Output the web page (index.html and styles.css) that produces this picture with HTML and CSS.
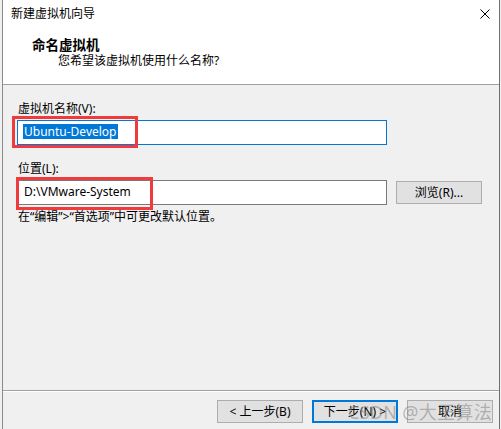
FILE: index.html
```html
<!DOCTYPE html>
<html lang="zh-CN">
<head>
<meta charset="utf-8">
<title>新建虚拟机向导</title>
<link rel="stylesheet" href="styles.css">
</head>
<body>
<div class="window">
  <div class="top">
    <div class="titlebar">
      <span class="title">新建虚拟机向导</span>
      <svg class="close" width="10" height="10" viewBox="0 0 10 10"><path d="M0.5 0.5 L9.5 9.5 M9.5 0.5 L0.5 9.5" stroke="#000" stroke-width="1" fill="none"/></svg>
    </div>
    <div class="header">
      <div class="h-title">命名虚拟机</div>
      <div class="h-sub">您希望该虚拟机使用什么名称?</div>
    </div>
  </div>
  <div class="content">
    <div class="label first">虚拟机名称(V):</div>
    <div class="field-wrap">
      <div class="input focused"><span class="sel">Ubuntu-Develop</span></div>
      <div class="mark mark-name"></div>
    </div>
    <div class="label second">位置(L):</div>
    <div class="row">
      <div class="field-wrap">
        <div class="input"><span class="val">D:\VMware-System</span></div>
        <div class="mark mark-loc"></div>
      </div>
      <button class="btn browse">浏览(R)...</button>
    </div>
    <div class="note">在“编辑”&gt;“首选项”中可更改默认位置。</div>
  </div>
  <div class="footer">
    <div class="footer-inner">
      <button class="btn">&lt; 上一步(B)</button>
      <button class="btn primary">下一步(N) &gt;</button>
      <button class="btn">取消</button>
    </div>
    <div class="watermark">CSDN @大王算法</div>
  </div>
</div>
</body>
</html>
```
FILE: styles.css
```css
html, body {
  margin: 0;
  padding: 0;
  background: #f0f0f0;
}
body {
  font-family: "Noto Sans", "Noto Sans CJK SC", sans-serif;
  font-size: 12px;
  color: #000;
}
.window {
  margin-left: 2px;
  width: 498px;
  height: 429px;
  box-sizing: border-box;
  border-left: 1px solid #8a8a8a;
  border-right: 1px solid #707070;
  background: #f0f0f0;
  display: flex;
  flex-direction: column;
}
.top {
  background: #fff;
  height: 85px;
  box-sizing: border-box;
  border-bottom: 1px solid #a0a0a0;
}
.titlebar {
  height: 28px;
  display: flex;
  align-items: center;
  justify-content: space-between;
  padding: 0 9px 0 8px;
}
.title {
  line-height: 16px;
}
.close {
  display: block;
}
.header {
  padding-top: 8px;
  padding-left: 29px;
}
.h-title {
  font-family: "Noto Sans CJK SC", sans-serif;
  font-weight: bold;
  font-size: 13.5px;
  line-height: 16px;
}
.h-sub {
  line-height: 16px;
  padding-left: 26px;
  padding-top: 1px;
}
.content {
  flex: 1;
  padding-left: 14px;
}
.label {
  line-height: 16px;
  padding-left: 1px;
}
.label.first {
  margin-top: 16px;
  margin-bottom: 3px;
}
.label.second {
  margin-top: 16px;
  margin-bottom: 3px;
}
.field-wrap {
  position: relative;
  width: 370px;
}
.input {
  height: 25px;
  box-sizing: border-box;
  border: 1px solid #7a7a7a;
  background: #fff;
  display: flex;
  align-items: center;
  padding-left: 5px;
  padding-bottom: 2px;
}
.input.focused {
  border-color: #0078d7;
}
.sel {
  background: #0078d7;
  color: #fff;
  line-height: 15px;
  padding: 0 1px;
}
.val {
  line-height: 15px;
  padding-left: 1px;
}
.mark {
  position: absolute;
  border: 3px solid #ef3b3b;
  box-sizing: border-box;
  pointer-events: none;
}
.mark-name {
  left: -5px;
  top: -4px;
  width: 126px;
  height: 32px;
}
.mark-loc {
  left: -1px;
  top: -3px;
  width: 137px;
  height: 33px;
}
.row {
  display: flex;
  align-items: center;
}
.btn {
  font-family: "Noto Sans", "Noto Sans CJK SC", sans-serif;
  font-size: 12px;
  color: #000;
  width: 86px;
  height: 23px;
  box-sizing: border-box;
  border: 1px solid #adadad;
  background: #e1e1e1;
  padding: 0;
  margin: 0;
  line-height: 16px;
}
.browse {
  margin-left: 9px;
}
.note {
  margin-top: 4px;
  line-height: 16px;
  padding-left: 1px;
}
.footer {
  position: relative;
  height: 39px;
  box-sizing: border-box;
  border-top: 1px solid #a0a0a0;
}
.footer-inner {
  border-top: 1px solid #fff;
  display: flex;
  justify-content: flex-end;
  gap: 9px;
  padding: 8px 6px 0 0;
}
.btn.primary {
  border: 2px solid #0078d7;
}
.watermark {
  position: absolute;
  left: 345px;
  top: 10px;
  font-family: "Noto Sans", "Noto Sans CJK SC", sans-serif;
  font-size: 18px;
  line-height: 22px;
  letter-spacing: 0.3px;
  color: rgba(140, 140, 140, 0.6);
  white-space: nowrap;
  pointer-events: none;
}
```
